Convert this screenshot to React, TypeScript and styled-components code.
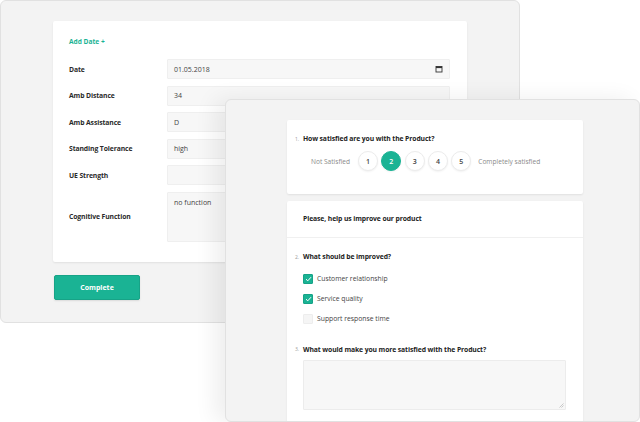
import React from "react";
import styled, { createGlobalStyle } from "styled-components";

const teal = "#1ab394";

const Global = createGlobalStyle`
  html, body { margin: 0; padding: 0; background: #fff; }
  body { font-family: "Open Sans", "Liberation Sans", sans-serif; color: #333; }
  * { box-sizing: border-box; }
`;

const Desktop = styled.div`
  position: relative;
  width: 640px;
  height: 422px;
  overflow: hidden;
  background: #fff;
`;

const Window = styled.div<{ $left: number; $top: number; $w: number; $h: number; $shadow?: boolean }>`
  position: absolute;
  left: ${(p) => p.$left}px;
  top: ${(p) => p.$top}px;
  width: ${(p) => p.$w}px;
  height: ${(p) => p.$h}px;
  background: #f3f3f3;
  border: 1px solid #e1e1e1;
  border-radius: 6px;
  overflow: hidden;
  box-shadow: ${(p) => (p.$shadow ? "-10px 0 22px rgba(0,0,0,0.07)" : "none")};
  display: flex;
  flex-direction: column;
`;

const FormArea = styled.div`
  padding: 20px 0 0 52px;
  display: flex;
  flex-direction: column;
  align-items: flex-start;
  gap: 13px;
`;

const Card = styled.div<{ $w: number }>`
  width: ${(p) => p.$w}px;
  background: #fff;
  border-radius: 2px;
  box-shadow: 0 1px 2px rgba(0, 0, 0, 0.08);
`;

const FormCard = styled(Card)`
  padding: 16px 16px 20px 16px;
  display: flex;
  flex-direction: column;
`;

const AddDate = styled.div`
  font-size: 6.6px;
  font-weight: 700;
  color: ${teal};
  line-height: 10px;
  margin-bottom: 12px;
`;

const Rows = styled.div`
  display: flex;
  flex-direction: column;
  gap: 6.5px;
`;

const Row = styled.div`
  display: flex;
  align-items: center;
`;

const Label = styled.div`
  width: 98px;
  font-size: 6.8px;
  font-weight: 700;
  letter-spacing: -0.1px;
  color: #2a2a2a;
`;

const Field = styled.div<{ $tall?: boolean }>`
  position: relative;
  width: 283px;
  height: ${(p) => (p.$tall ? 50 : 20)}px;
  background: #f7f7f7;
  border: 1px solid #efefef;
  border-radius: 1px;
  font-size: 7px;
  color: #444;
  padding: ${(p) => (p.$tall ? "5px 6px" : "0 6px")};
  display: flex;
  align-items: ${(p) => (p.$tall ? "flex-start" : "center")};
  justify-content: space-between;
`;

const CompleteButton = styled.button`
  width: 86px;
  height: 25px;
  background: ${teal};
  border: 1px solid #17a387;
  border-radius: 2px;
  color: #fff;
  font-family: "Open Sans", "Liberation Sans", sans-serif;
  font-size: 7px;
  font-weight: 700;
  padding: 0;
  margin-left: 1px;
  box-shadow: 0 1px 2px rgba(0, 0, 0, 0.1);
`;

const SurveyArea = styled.div`
  padding: 20px 0 0 61px;
  display: flex;
  flex-direction: column;
  gap: 7px;
`;

const RatingCard = styled(Card)`
  height: 74px;
  padding: 14px 16px 0 8px;
`;

const Question = styled.div<{ $mb: number }>`
  display: flex;
  align-items: center;
  font-size: 6.8px;
  font-weight: 700;
  letter-spacing: -0.1px;
  color: #222;
  margin-bottom: ${(p) => p.$mb}px;
`;

const QNum = styled.span`
  width: 8px;
  font-size: 5px;
  font-weight: 400;
  color: #999;
`;

const Scale = styled.div`
  display: flex;
  align-items: center;
  padding-left: 16px;
  font-size: 6.6px;
  color: #8a8a8a;
`;

const Circles = styled.div`
  display: flex;
  gap: 3.3px;
  margin: 0 7px 0 8px;
`;

const Circle = styled.div<{ $active?: boolean }>`
  width: 20px;
  height: 20px;
  border-radius: 50%;
  display: flex;
  align-items: center;
  justify-content: center;
  font-size: 7px;
  font-weight: 600;
  color: ${(p) => (p.$active ? "#fff" : "#444")};
  background: ${(p) => (p.$active ? teal : "#fff")};
  border: 1px solid ${(p) => (p.$active ? teal : "#ececec")};
  box-shadow: 0 1px 2px rgba(0, 0, 0, 0.06);
`;

const ImproveCard = styled(Card)`
  height: 240px;
  display: flex;
  flex-direction: column;
`;

const CardHeader = styled.div`
  height: 37px;
  padding: 0 0 1px 16px;
  display: flex;
  align-items: center;
  font-size: 6.8px;
  font-weight: 700;
  letter-spacing: -0.1px;
  color: #222;
  border-bottom: 1px solid #f0f0f0;
`;

const CardBody = styled.div`
  padding: 14px 16px 0 8px;
`;

const Checks = styled.div`
  display: flex;
  flex-direction: column;
  gap: 10px;
  padding-left: 8px;
  margin-bottom: 21.4px;
`;

const CheckRow = styled.div`
  display: flex;
  align-items: center;
  gap: 4px;
  height: 10px;
  font-size: 6.8px;
  color: #444;
`;

const Box = styled.div<{ $checked?: boolean }>`
  width: 10px;
  height: 10px;
  border-radius: 1px;
  background: ${(p) => (p.$checked ? teal : "#f5f5f5")};
  border: 1px solid ${(p) => (p.$checked ? "#17a387" : "#ededed")};
  display: flex;
  align-items: center;
  justify-content: center;
`;

const TextArea = styled.div`
  position: relative;
  margin-left: 8px;
  width: 263px;
  height: 50px;
  background: #f7f7f7;
  border: 1px solid #ececec;
  border-radius: 1px;
`;

const Grip = styled.svg`
  position: absolute;
  right: 1px;
  bottom: 1px;
`;

const CalendarIcon = () => (
  <svg width="8" height="8" viewBox="0 0 8 8">
    <rect x="1" y="1.5" width="6" height="5.5" fill="none" stroke="#333" strokeWidth="0.9" />
    <rect x="1" y="1.5" width="6" height="1.6" fill="#333" />
  </svg>
);

const Check = () => (
  <svg width="7" height="6" viewBox="0 0 7 6">
    <polyline points="1,3.2 2.8,4.8 6,1.2" fill="none" stroke="#fff" strokeWidth="1" />
  </svg>
);

const fields: { label: string; value: string; tall?: boolean; date?: boolean }[] = [
  { label: "Date", value: "01.05.2018", date: true },
  { label: "Amb Distance", value: "34" },
  { label: "Amb Assistance", value: "D" },
  { label: "Standing Tolerance", value: "high" },
  { label: "UE Strength", value: "" },
  { label: "Cognitive Function", value: "no function", tall: true },
];

const options = [
  { text: "Customer relationship", checked: true },
  { text: "Service quality", checked: true },
  { text: "Support response time", checked: false },
];

export default function App() {
  return (
    <>
      <Global />
      <Desktop>
        <Window $left={0} $top={0} $w={520} $h={323}>
          <FormArea>
            <FormCard $w={414}>
              <AddDate>Add Date +</AddDate>
              <Rows>
                {fields.map((f) => (
                  <Row key={f.label}>
                    <Label>{f.label}</Label>
                    <Field $tall={f.tall}>
                      <span>{f.value}</span>
                      {f.date && <CalendarIcon />}
                    </Field>
                  </Row>
                ))}
              </Rows>
            </FormCard>
            <CompleteButton>Complete</CompleteButton>
          </FormArea>
        </Window>
        <Window $left={225} $top={99} $w={415} $h={323} $shadow>
          <SurveyArea>
            <RatingCard $w={296}>
              <Question $mb={8}>
                <QNum>1.</QNum>How satisfied are you with the Product?
              </Question>
              <Scale>
                <span>Not Satisfied</span>
                <Circles>
                  {[1, 2, 3, 4, 5].map((n) => (
                    <Circle key={n} $active={n === 2}>
                      {n}
                    </Circle>
                  ))}
                </Circles>
                <span>Completely satisfied</span>
              </Scale>
            </RatingCard>
            <ImproveCard $w={296}>
              <CardHeader>Please, help us improve our product</CardHeader>
              <CardBody>
                <Question $mb={12.5}>
                  <QNum>2.</QNum>What should be improved?
                </Question>
                <Checks>
                  {options.map((o) => (
                    <CheckRow key={o.text}>
                      <Box $checked={o.checked}>{o.checked && <Check />}</Box>
                      {o.text}
                    </CheckRow>
                  ))}
                </Checks>
                <Question $mb={6.4}>
                  <QNum>3.</QNum>What would make you more satisfied with the Product?
                </Question>
                <TextArea>
                  <Grip width="5" height="5" viewBox="0 0 5 5">
                    <line x1="0.5" y1="4.5" x2="4.5" y2="0.5" stroke="#aaa" strokeWidth="0.6" />
                    <line x1="2.5" y1="4.5" x2="4.5" y2="2.5" stroke="#aaa" strokeWidth="0.6" />
                  </Grip>
                </TextArea>
              </CardBody>
            </ImproveCard>
          </SurveyArea>
        </Window>
      </Desktop>
    </>
  );
}
